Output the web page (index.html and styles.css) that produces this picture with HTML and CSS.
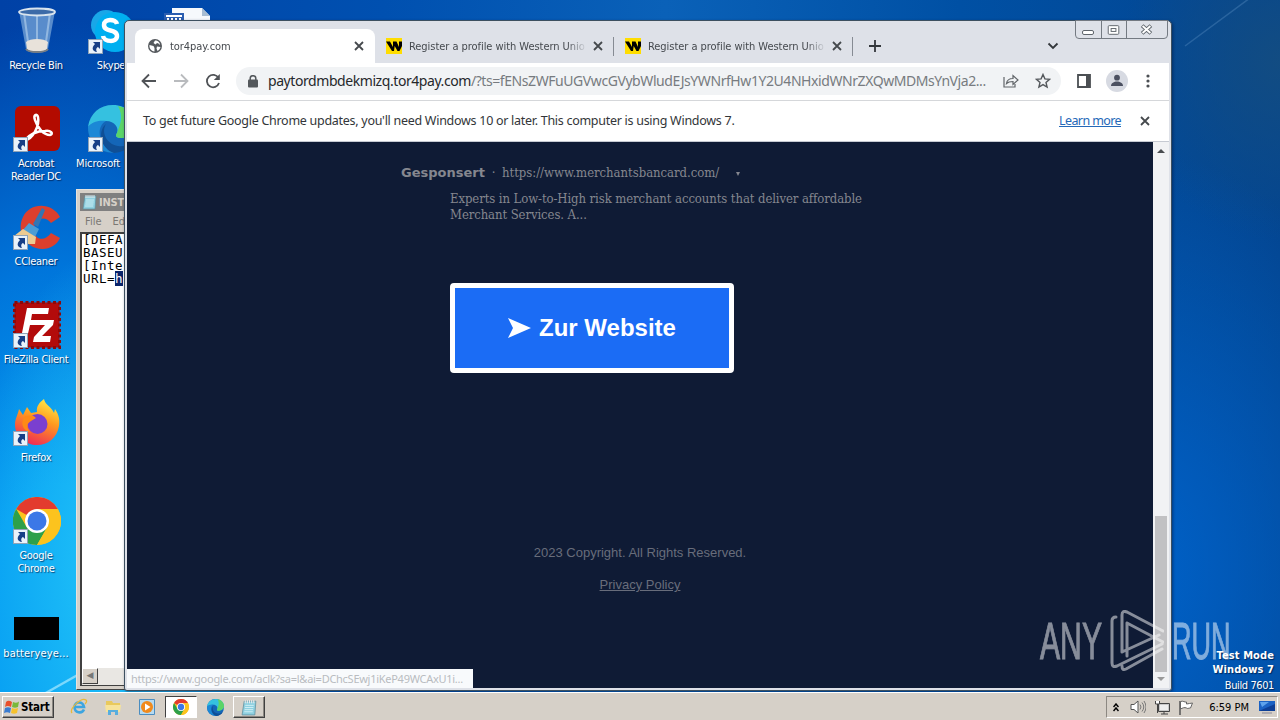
FILE: index.html
```html
<!DOCTYPE html>
<html lang="en">
<head>
    <meta charset="UTF-8">
    <meta name="viewport" content="width=device-width, initial-scale=1.0">
    <title>tor4pay.com</title>
    <link rel="stylesheet" href="styles.css">
</head>
<body>
    <svg width="0" height="0" class="defs">
        <defs>
            <symbol id="shortcut" viewBox="0 0 15 15">
                <rect width="15" height="15" fill="#8fa3b8"/>
                <rect x="1" y="1" width="13" height="13" fill="#e9f2fa"/>
                <path d="M5 3h7v7l-2-2C8.500 8.500 7.500 10.500 9 13 4.500 12.500 3 9 7 5z" fill="#173f86"/>
            </symbol>
            <symbol id="chrome" viewBox="0 0 48 48">
                <circle cx="24" cy="24" r="24" fill="#fcc31e"/>
                <path d="M24 24 3.200 12A24 24 0 0 1 44.800 12z" fill="#e33b2e"/>
                <path d="M3.200 12A24 24 0 0 0 24 48L34.400 30 24 24 13.600 30z" fill="#2da04a"/>
                <path d="M24 12H44.800A24 24 0 0 1 24 48L34.400 30z" fill="#fcc31e"/>
                <circle cx="24" cy="24" r="12" fill="#fff"/>
                <circle cx="24" cy="24" r="9.500" fill="#3b78e7"/>
            </symbol>
            <symbol id="edge" viewBox="0 0 48 48">
                <circle cx="24" cy="24" r="24" fill="#1466b8"/>
                <path d="M0 22C2 8 12 0 25 0c14 0 23 10 23 20 0 8-7 13-14 13-6 0-7-2-5-5 2-5-2-12-11-12C9 16 3 19 0 22z" fill="#35c1e0"/>
                <path d="M30 1c11 2 18 10 18 19 0 8-7 13-14 13-6 0-7-2-5-5 3-8 7-16 1-27z" fill="#5bd468"/>
                <path d="M18 16c-6 3-8 11-5 19 3 7 10 12 18 12-14 3-31-6-31-25 3-4 9-7 18-6z" fill="#1b88d6"/>
                <path d="M18 19c-5 8 0 20 12 22 6 1 11-1 15-5-3 7-11 12-19 12C13 44 9 26 18 19z" fill="#0f4f96"/>
            </symbol>
            <symbol id="notepad" viewBox="0 0 16 16">
                <path d="M3 2h11l-1 13H1z" fill="#8fd0e0" stroke="#5d8c9c" stroke-width=".7"/>
                <path d="M4 6h8M3.700 8h8M3.400 10h8M3.100 12h8" stroke="#d8f3f8" stroke-width=".8"/>
                <path d="M4 1v3M6 1v3M8 1v3M10 1v3M12 1v3" stroke="#e9e9e9" stroke-width="1"/>
            </symbol>
            <symbol id="wu" viewBox="0 0 16 16">
                <rect width="16" height="16" fill="#fd0"/>
                <path d="M0 3.500h4l3 5.500V3.500h3.500L13 9V3.500h3V8l-2.500 5h-2L8.700 8 8 13H6z"/>
            </symbol>
            <symbol id="close" viewBox="0 0 10 10">
                <path d="M1 1l8 8M9 1l-8 8" stroke="#45494d" stroke-width="1.800" fill="none"/>
            </symbol>
        </defs>
    </svg>

    <div class="desktop">
        <svg class="rays" viewBox="0 0 1280 720">
            <path d="M44 694L90 668" stroke="#9fe6ff" stroke-width="2.500" opacity=".75"/>
            <path d="M1185 46L1250 -2" stroke="#6fa0d0" stroke-width="1.500" opacity=".3"/>
        </svg>

        <div class="icons col-1">
            <div class="icon">
                <svg class="pic" viewBox="0 0 48 48">
                    <path d="M6 4l7 38c0 5 22 5 22 0l7-38z" fill="#6f9fd4" opacity=".8"/>
                    <path d="M11 6l5 36M24 7v30M37 6l-5 36" stroke="#b9d4ee" stroke-width="2" opacity=".6"/>
                    <path d="M13 35c4-4 18-4 22 0l-1 7c-4 4-16 4-20 0z" fill="#e8e2da"/>
                    <ellipse cx="24" cy="5" rx="18" ry="3.500" fill="#3d6ba8" stroke="#d9e4ee" stroke-width="1.800"/>
                    <path d="M13 42c3 4 19 4 22 0" fill="none" stroke="#777d83" stroke-width="2"/>
                </svg>
                <span>Recycle Bin</span>
            </div>
            <div class="icon">
                <svg class="pic" viewBox="0 0 48 48">
                    <rect x="2" y="1" width="45" height="45" rx="6" fill="#b30b00"/>
                    <path d="M12 35c7 0 15-14 13-23-1-4-5-2-3 3 3 9 9 15 15 15 4-1 1-5-5-4-8 0-15 3-20 9z" fill="none" stroke="#fff" stroke-width="2.500"/>
                    <use href="#shortcut" x="0" y="32" width="15" height="15"/>
                </svg>
                <span>Acrobat<br>Reader DC</span>
            </div>
            <div class="icon">
                <svg class="pic" viewBox="0 0 48 48">
                    <path d="M47 14C39-1 17-1 10 14c-6 12 0 27 13 31 10 3 20-1 24-10l-9-5c-7 10-18 6-17-5 1-10 11-13 17-5z" fill="#dc3f2d"/>
                    <path d="M29 5l3 2-7 17-5-3z" fill="#3276b4"/>
                    <path d="M16 20l10 6-4 8-12-7z" fill="#4d9dd4"/>
                    <path d="M10 26l13 8-1 7H2l-1-8z" fill="#edcb91"/>
                    <use href="#shortcut" x="0" y="32" width="15" height="15"/>
                </svg>
                <span>CCleaner</span>
            </div>
            <div class="icon">
                <svg class="pic" viewBox="0 0 48 48">
                    <rect x="1.500" y="1.500" width="45" height="45" fill="#b30b0b" stroke="#8d0808" stroke-width="3" stroke-dasharray="3 2.500"/>
                    <path d="M14 7h22l-1 6H19l-1 6h11l-1 5H17l-3 13H8z" fill="#fff"/>
                    <path d="M26 19h15l-1 5-11 11h9l-1 6H20l1-5 11-12h-7z" fill="#fff"/>
                    <use href="#shortcut" x="0" y="32" width="15" height="15"/>
                </svg>
                <span>FileZilla Client</span>
            </div>
            <div class="icon">
                <svg class="pic" viewBox="0 0 48 48">
                    <defs>
                        <linearGradient id="fox" x1=".8" y1="0" x2=".4" y2="1">
                            <stop offset="0" stop-color="#fff04a"/>
                            <stop offset=".45" stop-color="#ff9a1f"/>
                            <stop offset="1" stop-color="#f02c55"/>
                        </linearGradient>
                    </defs>
                    <path d="M2 26c0-7 3-10 4-16l4 6 4-8 4 6 6-1c-1-6 3-10 7-13 1 6 8 8 10 14l1-4c4 6 5 11 4 17-2 12-11 19-22 19S2 38 2 26z" fill="url(#fox)"/>
                    <circle cx="24.500" cy="25" r="10" fill="#7a3fd0"/>
                    <path d="M12 17c5-1 9-1 11 2l-5 3c-5 3-5 7 0 12-9-3-11-10-6-17z" fill="#ff8a16"/>
                    <use href="#shortcut" x="0" y="32" width="15" height="15"/>
                </svg>
                <span>Firefox</span>
            </div>
            <div class="icon">
                <svg class="pic" viewBox="0 0 48 48">
                    <use href="#chrome" width="48" height="48"/>
                    <use href="#shortcut" x="0" y="32" width="15" height="15"/>
                </svg>
                <span>Google<br>Chrome</span>
            </div>
            <div class="icon">
                <svg class="pic" viewBox="0 0 48 48"><rect x="1" y="22" width="45" height="23"/></svg>
                <span class="wide">batteryeye...</span>
            </div>
        </div>

        <div class="icons col-2">
            <div class="icon">
                <svg class="pic" viewBox="0 0 48 48">
                    <circle cx="18" cy="18" r="15" fill="#19a7e8"/>
                    <circle cx="27" cy="25" r="20" fill="#00aff0"/>
                    <path d="M29 17c-1-5-13-6-13 1 0 8 13 3 13 11 0 7-13 6-14 0" fill="none" stroke="#fff" stroke-width="4.500"/>
                    <use href="#shortcut" x="0" y="32" width="15" height="15"/>
                </svg>
                <span>Skype</span>
            </div>
            <div class="icon">
                <svg class="pic" viewBox="0 0 48 48">
                    <use href="#edge" width="48" height="48"/>
                    <use href="#shortcut" x="0" y="32" width="15" height="15"/>
                </svg>
                <span class="edge-label">Microsoft</span>
            </div>
        </div>

        <div class="icons col-3">
            <div class="icon">
                <svg class="pic" viewBox="0 0 48 48">
                    <path d="M9 1h30l8 8v38H9z" fill="#f6f9fc"/>
                    <path d="M39 1v8h8z" fill="#a8bdd2"/>
                    <rect x="1" y="6" width="20" height="22" fill="#2a5db0"/>
                    <path d="M3 9h16M4 12h2m2 0h2m2 0h2m2 0h2" stroke="#fff" stroke-width="2"/>
                </svg>
            </div>
        </div>

        <!-- notepad, mostly hidden behind the browser -->
        <div class="notepad">
            <div class="np-title"><svg width="16" height="16"><use href="#notepad"/></svg><span>INST</span></div>
            <div class="np-menu"><span>File</span><span>Ed</span></div>
            <div class="np-body">
                <pre>[DEFA
BASEU
[Inte
URL=<mark>h</mark></pre>
                <div class="np-scroll"><i>◀</i></div>
            </div>
        </div>

        <div class="browser">
            <div class="tabstrip">
                <div class="tab active">
                    <svg width="16" height="16" viewBox="0 0 16 16">
                        <circle cx="8" cy="8" r="7" fill="#55595d"/>
                        <path d="M2.500 7l4 1 1 2v3.500C4 13 2 10 2.500 7zM8 2.500L6.500 5l2 1.500L10 5l1.500.5L13 7c0-2.500-2-4.500-5-4.500zM10 8.500l3.500.5c-.5 2-1.500 3-3 4l-1-2.500z" fill="#fff"/>
                    </svg>
                    <span class="tab-title">tor4pay.com</span>
                    <svg class="tab-x"><use href="#close"/></svg>
                </div>
                <div class="tab">
                    <svg width="16" height="16"><use href="#wu"/></svg>
                    <span class="tab-title">Register a profile with Western Unio</span>
                    <svg class="tab-x"><use href="#close"/></svg>
                </div>
                <div class="tab">
                    <svg width="16" height="16"><use href="#wu"/></svg>
                    <span class="tab-title">Register a profile with Western Unio</span>
                    <svg class="tab-x"><use href="#close"/></svg>
                </div>
                <svg class="new-tab" width="12" height="12" viewBox="0 0 12 12"><path d="M6 0v12M0 6h12" stroke="#33373b" stroke-width="1.800"/></svg>
                <svg class="tab-search" width="12" height="8" viewBox="0 0 12 8"><path d="M1.500 1.500L6 6l4.500-4.500" stroke="#33373b" stroke-width="1.800" fill="none"/></svg>
                <div class="win-buttons">
                    <svg width="25" height="17" viewBox="0 0 25 17"><rect x="6.500" y="9.500" width="11" height="4" rx="1.500" fill="#fff" stroke="#5f656c"/></svg>
                    <svg width="25" height="17" viewBox="0 0 25 17"><rect x="6.500" y="4.500" width="11" height="9" rx="1" fill="#fff" stroke="#5f656c"/><rect x="9.500" y="7.500" width="5" height="3" fill="#fff" stroke="#5f656c"/></svg>
                    <svg width="41" height="17" viewBox="0 0 41 17"><path d="M15.500 4.500l9 8M24.500 4.500l-9 8" stroke="#5f656c" stroke-width="4"/><path d="M16 5l8 7M24 5l-8 7" stroke="#fff" stroke-width="2"/></svg>
                </div>
            </div>

            <div class="toolbar">
                <svg class="nav" viewBox="0 0 16 16"><path d="M15 8H2M8 1.500L1.500 8 8 14.500" stroke="#505357"/></svg>
                <svg class="nav" viewBox="0 0 16 16"><path d="M1 8h13M8 1.500L14.500 8 8 14.500" stroke="#b9bbbe"/></svg>
                <svg class="nav" viewBox="0 0 16 16"><path d="M13.500 5A6.200 6.200 0 1 0 14 10" stroke="#505357"/><path d="M14.800 1v6h-6z" fill="#505357"/></svg>
                <div class="omnibox">
                    <svg width="10" height="13" viewBox="0 0 10 13"><rect y="4.500" width="10" height="8" rx="1" fill="#54585c"/><path d="M2.200 5V3.500a2.800 2.800 0 0 1 5.600 0V5" fill="none" stroke="#54585c" stroke-width="1.500"/></svg>
                    <span class="url"><b>paytordmbdekmizq.tor4pay.com</b><i>/?ts=fENsZWFuUGVwcGVybWludEJsYWNrfHw1Y2U4NHxidWNrZXQwMDMsYnVja2...</i></span>
                    <svg class="share" width="16" height="14" viewBox="0 0 16 14"><path d="M1 3v10h11v-3M3.500 9.500C4 6 6.500 4.500 10 4.500V1.500l5 4.500-5 4.500v-3c-3 0-5 .5-6.500 2z" fill="none" stroke="#606468" stroke-width="1.200"/></svg>
                    <svg width="16" height="16" viewBox="0 0 16 16"><path d="M8 1.500l1.900 4.400 4.700.4-3.600 3.100 1.100 4.700L8 11.600l-4.100 2.500L5 9.400 1.400 6.300l4.700-.4z" fill="none" stroke="#54585c" stroke-width="1.400"/></svg>
                </div>
                <svg width="14" height="14" viewBox="0 0 14 14"><path d="M1 1h12v12H1z" fill="none" stroke="#4b4f53" stroke-width="1.800"/><path d="M9 1h4v12H9z" fill="#4b4f53"/></svg>
                <svg class="avatar" width="22" height="22" viewBox="0 0 22 22"><circle cx="11" cy="11" r="11" fill="#d7dae2"/><circle cx="11" cy="7.700" r="2.900" fill="#4b5060"/><path d="M5 16c0-6 12-6 12 0z" fill="#4b5060"/></svg>
                <svg width="4" height="14" viewBox="0 0 4 14" fill="#4b4f53"><circle cx="2" cy="2" r="1.600"/><circle cx="2" cy="7" r="1.600"/><circle cx="2" cy="12" r="1.600"/></svg>
            </div>

            <div class="infobar">
                <span class="info-text">To get future Google Chrome updates, you'll need Windows 10 or later. This computer is using Windows 7.</span>
                <a href="#">Learn more</a>
                <svg class="info-x"><use href="#close"/></svg>
            </div>

            <div class="viewport">
                <div class="page">
                    <div class="ad-line"><b>Gesponsert</b><span class="dot">·</span><span class="ad-url">https://www.merchantsbancard.com/</span><i></i></div>
                    <p class="ad-text">Experts in Low-to-High risk merchant accounts that deliver affordable<br>Merchant Services. A...</p>
                    <a class="cta" href="#"><svg width="23" height="20" viewBox="0 0 23 20"><path d="M0 0l23 10L0 20l5-10z" fill="#fff"/></svg><span>Zur Website</span></a>
                    <div class="footer">
                        <p>2023 Copyright. All Rights Reserved.</p>
                        <a href="#">Privacy Policy</a>
                    </div>
                </div>
                <div class="scrollbar">
                    <i class="up"></i>
                    <i class="thumb"></i>
                    <i class="down"></i>
                </div>
                <div class="status">https://www.google.com/aclk?sa=l&amp;ai=DChcSEwj1iKeP49WCAxU1i...</div>
            </div>
        </div>

        <div class="build"><b>Test Mode</b><b>Windows 7</b><span>Build 7601</span></div>

        <div class="watermark">
            <span>ANY</span>
            <svg width="54" height="62" viewBox="0 0 54 62" fill="none" stroke="#fff" stroke-width="3" stroke-linejoin="round" stroke-linecap="round">
                <path d="M6 7q-4 0-4 4v42q0 5 5 3L52 34"/>
                <path d="M12 42V5q0-5 5-3l36 19M17 13l36 19M17 13v33M12 42l37-17M52 39L16 59q-4 2-4-3"/>
            </svg>
            <span>RUN</span>
        </div>
    </div>

    <div class="taskbar">
        <div class="start">
            <svg width="16" height="14" viewBox="0 0 16 14">
                <path d="M2 2c2-2 4-1 6 0L7 7C5 6 3 5.500 1 7z" fill="#e8502c"/>
                <path d="M9 2c2 1 4 1 6-.5L14 7c-2 1-4 1-6 0z" fill="#79b83a"/>
                <path d="M1 8c2-1 4-1 6 0l-1 5c-2-1-4-1-6 0z" fill="#3a7cd0"/>
                <path d="M8 8c2 1 4 1 6 0l-1 5c-2 1-4 1-6 0z" fill="#f6c22c"/>
            </svg>
            <b>Start</b>
        </div>
        <div class="quick">
            <svg width="18" height="18" viewBox="0 0 18 18"><path d="M14 11.500C12 16 4.500 15 4.500 9S13 3 14 9H5" fill="none" stroke="#3da5e0" stroke-width="2.600"/><path d="M2 15C-1 11 11-1 16 2c1 1 0 3-1 4" fill="none" stroke="#e8b93a" stroke-width="1.300"/></svg>
            <svg width="18" height="18" viewBox="0 0 18 18"><path d="M2 3h6l1 2h7v9H2z" fill="#e9c95c"/><path d="M1 7h16l-1 7H2z" fill="#f7e39a"/><path d="M4 17v-5h10v5h-3v-3H7v3z" fill="#58aede"/></svg>
            <svg width="18" height="18" viewBox="0 0 18 18"><path d="M1.500 1.500h15v15h-15z" fill="#b6daf0" stroke="#4b8dc0"/><circle cx="9" cy="9" r="6" fill="#f08a1c"/><path d="M7 5.500v7L12.500 9z" fill="#fff"/></svg>
        </div>
        <div class="task pressed"><svg width="16" height="16"><use href="#chrome"/></svg></div>
        <svg class="edge-task" width="17" height="17"><use href="#edge"/></svg>
        <div class="task"><svg width="17" height="17"><use href="#notepad"/></svg></div>
        <div class="tray">
            <svg width="6" height="9" viewBox="0 0 6 9"><path d="M.5 4L3 1l2.500 3M.5 8L3 5l2.500 3" fill="none" stroke="#000" stroke-width="1.500"/></svg>
            <svg class="speaker" width="16" height="14" viewBox="0 0 16 14"><path d="M1 4.500h3L8 1v12L4 9.500H1z" fill="#fff" stroke="#555"/><path d="M10 4.500q2 2.500 0 5M12 2.500q3.500 4.500 0 9M14 1q4 6 0 12" fill="none" stroke="#777"/></svg>
            <svg class="net" width="16" height="15" viewBox="0 0 16 15"><path d="M4.500 3.500h11v8h-11z" fill="#c9c9c9" stroke="#444"/><path d="M6 5h8v5H6z" fill="#eee"/><path d="M7 14h7M10 12v2" stroke="#444"/><path d="M1.500 1v3h4V1M3.500 4v9" stroke="#444" fill="#fff"/></svg>
            <svg class="flag" width="16" height="15" viewBox="0 0 16 15"><path d="M2 1v14" stroke="#555" stroke-width="1.500"/><path d="M2.500 1.500c3-1 4 1 6 .500v2c2 0 4-1 6-1l-2 5c-2 0-3 1-4 0-2-1-4 0-6 1z" fill="#fff" stroke="#666"/></svg>
            <span class="clock">6:59 PM</span>
            <svg width="16" height="13" viewBox="0 0 16 13"><path d="M0 0h16v10H0z" fill="#1b62c4"/><path d="M0 10L16 3v7z" fill="#0d3f96"/><path d="M1 1h9L3 6z" fill="#5da2ec"/><path d="M3 12h10" stroke="#889"/></svg>
        </div>
    </div>
</body>
</html>
```
FILE: styles.css
```css
* {
    box-sizing: border-box;
}
body {
    margin: 0;
    width: 1280px;
    height: 720px;
    overflow: hidden;
    position: relative;
    font-family: "DejaVu Sans Condensed", "DejaVu Sans", sans-serif;
    font-stretch: condensed;
    font-size: 11px;
}
svg {
    flex: none;
    display: block;
}
.defs {
    position: absolute;
}
p {
    margin: 0;
}

/* Desktop */
.desktop {
    height: 692px;
    position: relative;
    background:
        radial-gradient(ellipse 160px 330px at 125px 570px, rgba(40, 205, 250, .9), rgba(20, 170, 245, 0) 100%),
        radial-gradient(ellipse 330px 620px at 60px 640px, #059cf2 25%, rgba(0, 130, 232, .8) 60%, rgba(0, 72, 172, 0) 100%),
        radial-gradient(ellipse 300px 420px at 1130px 570px, #0062ca, rgba(0, 80, 180, 0) 100%),
        radial-gradient(ellipse 160px 180px at 1280px 60px, #124c82, rgba(0, 64, 140, 0) 100%),
        linear-gradient(90deg, #0041a6 0, #0050b0 30%, #0a61b8 52%, #0050a4 75%, #034590 100%);
}
.rays {
    position: absolute;
    inset: 0;
    width: 1280px;
    height: 720px;
}
.icons {
    position: absolute;
    top: 8px;
    width: 74px;
}
.col-1 {
    left: 0;
}
.col-2 {
    left: 75px;
}
.col-3 {
    left: 150px;
}
.icon {
    height: 98px;
    display: flex;
    flex-direction: column;
    align-items: center;
    gap: 3px;
    color: #fff;
    line-height: 13px;
    letter-spacing: -.3px;
    text-align: center;
    white-space: nowrap;
    text-shadow: 1px 1px 1px rgba(0, 20, 60, .7);
}
.icon .wide {
    letter-spacing: .15px;
}
.pic {
    width: 48px;
    height: 48px;
    margin-top: -1px;
}
.icon span {
    margin: 1px 2px 0 0;
}
.icon .edge-label {
    align-self: flex-start;
    margin-left: 1px;
    letter-spacing: -.1px;
}

/* Notepad */
.notepad {
    position: absolute;
    left: 76px;
    top: 189px;
    width: 300px;
    height: 501px;
    padding: 3px;
    background: #d6d0c8;
    border: 1px solid #e6e3de;
    border-bottom-color: #444;
    display: flex;
    flex-direction: column;
}
.np-title {
    height: 18px;
    display: flex;
    align-items: center;
    gap: 1px;
    padding-left: 2px;
    background: #808080;
    color: #d6d0c8;
    font-weight: bold;
    letter-spacing: -.2px;
}
.np-menu {
    height: 21px;
    display: flex;
    align-items: center;
    gap: 11px;
    padding-left: 5px;
    color: #7b7873;
}
.np-body {
    flex: 1;
    background: #fff;
    border: 1px solid #404040;
    border-width: 2px 1px 1px 2px;
    display: flex;
    flex-direction: column;
    justify-content: space-between;
}
.np-body pre {
    margin: -1px 0 0;
    padding-left: 1px;
    font: 12.5px/13px "DejaVu Sans Mono", monospace;
    letter-spacing: .45px;
}
.np-body mark {
    background: #0a246a;
    color: #fff;
}
.np-scroll {
    height: 17px;
    background: #e9e7e3;
}
.np-scroll i {
    display: block;
    width: 16px;
    height: 16px;
    font: 9px/13px "DejaVu Sans", sans-serif;
    text-align: center;
    color: #777;
    background: #d6d0c8;
    border: 1px solid #fff;
    border-right-color: #404040;
    border-bottom-color: #404040;
}

/* Browser */
.browser {
    position: absolute;
    left: 124px;
    top: 20px;
    width: 1048px;
    height: 671px;
    background: #dee1e8;
    border: 1px solid #3d5060;
    border-radius: 5px 5px 3px 3px;
    padding: 0 2px 2px;
    display: flex;
    flex-direction: column;
    box-shadow: 1px 1px 3px rgba(0, 20, 60, .5);
}
.tabstrip {
    height: 42px;
    padding: 8px 0 0 8px;
    display: flex;
    align-items: center;
    position: relative;
}
.tab {
    width: 239px;
    height: 34px;
    display: flex;
    align-items: center;
    padding-left: 11px;
    color: #45494e;
    position: relative;
}
.tab.active {
    width: 240px;
    padding-left: 12px;
    background: #fff;
    border-radius: 8px 8px 0 0;
}
.tab:not(.active)::after {
    content: "";
    position: absolute;
    right: 0;
    top: 8px;
    width: 1px;
    height: 19px;
    background: #868b93;
}
.tab-title {
    width: 176px;
    margin-left: 7px;
    overflow: hidden;
    white-space: nowrap;
    letter-spacing: -.05px;
    -webkit-mask-image: linear-gradient(90deg, #000 158px, transparent 178px);
    mask-image: linear-gradient(90deg, #000 158px, transparent 178px);
}
.tab-x {
    width: 10px;
    height: 10px;
    margin-left: 8px;
}
.new-tab {
    margin-left: 16px;
}
.tab-search {
    margin-left: 166px;
}
.win-buttons {
    position: absolute;
    right: 1px;
    top: -1px;
    display: flex;
    border: 1px solid #747a82;
    border-radius: 0 0 4px 4px;
}
.win-buttons svg + svg {
    border-left: 1px solid #747a82;
}
.toolbar {
    height: 38px;
    background: #fff;
    border-bottom: 1px solid #d5d7da;
    display: flex;
    align-items: center;
    padding: 0 20px 1px 14px;
    gap: 16px;
}
.nav {
    width: 16px;
    height: 16px;
    fill: none;
    stroke-width: 1.8;
}
.omnibox {
    width: 825px;
    height: 28px;
    margin-left: -1px;
    padding: 0 10px 0 12px;
    border-radius: 14px;
    background: #f1f3f5;
    display: flex;
    align-items: center;
}
.url {
    width: 731px;
    margin-left: 10px;
    font: 14px/18px "Noto Sans", sans-serif;
    letter-spacing: -.43px;
    white-space: nowrap;
    color: #777b80;
}
.url b, .url i {
    font-weight: normal;
    font-style: normal;
}
.url b {
    color: #26282b;
}
.share {
    margin: 0 16px 0 4px;
}
.avatar {
    margin: 0 2px 0 -1px;
}
.infobar {
    height: 41px;
    background: #fff;
    border-bottom: 1px solid #c6cad2;
    display: flex;
    align-items: center;
    padding: 0 19px 1px 16px;
    font: 12.5px "Noto Sans", sans-serif;
    letter-spacing: -.28px;
    color: #333639;
}
.infobar a {
    margin-left: auto;
    letter-spacing: -.6px;
    color: #2468b8;
}
.info-x {
    width: 10px;
    height: 10px;
    margin-left: 19px;
}
.viewport {
    flex: 1;
    display: flex;
    position: relative;
    background: #0f1b35;
}
.page {
    flex: 1;
    padding-top: 22px;
    color: #85878f;
}
.ad-line {
    display: flex;
    align-items: center;
    height: 16px;
    padding-left: 274px;
    font: 13px "DejaVu Serif Condensed", "DejaVu Serif", serif;
    white-space: nowrap;
}
.ad-line b {
    width: 84px;
    font: bold 13px "DejaVu Sans", sans-serif;
}
.dot {
    width: 17px;
    text-align: center;
}
.ad-url {
    width: 217px;
    letter-spacing: -.03px;
}
.ad-line i {
    margin: 4px 0 0 17px;
    border: 2.5px solid transparent;
    border-top: 4px solid #85878f;
    border-bottom: 0;
}
.ad-text {
    margin: 11px 0 0 323px;
    font: 13px/16px "DejaVu Serif Condensed", "DejaVu Serif", serif;
    letter-spacing: -.09px;
    white-space: nowrap;
}
.cta {
    width: 284px;
    height: 90px;
    margin: 60px 0 0 323px;
    display: flex;
    align-items: center;
    justify-content: center;
    gap: 8px;
    background: #1b6cf5;
    border: 5px solid #fff;
    border-radius: 4px;
    color: #fff;
    font: bold 24px "Liberation Sans", sans-serif;
    text-decoration: none;
}
.footer {
    margin-top: 172px;
    text-align: center;
    font: 13px/16px "Liberation Sans", sans-serif;
    color: #686d7b;
}
.footer a {
    display: inline-block;
    margin-top: 16px;
    color: #686d7b;
}
.scrollbar {
    width: 16px;
    background: #f1f2f4;
    display: flex;
    flex-direction: column;
    align-items: center;
    padding: 7px 0 7px;
}
.up, .down {
    border: 4px solid transparent;
}
.up {
    border-top: 0;
    border-bottom: 4px solid #484b4f;
}
.down {
    margin-top: 5px;
    border-bottom: 0;
    border-top: 4px solid #999;
}
.thumb {
    width: 12px;
    height: 156px;
    margin-top: auto;
    background: #c1c1c3;
}
.status {
    position: absolute;
    left: 0;
    bottom: 0;
    width: 346px;
    height: 19px;
    padding-left: 4px;
    background: #f8fafc;
    color: #b9bcc0;
    font: 11px/20px "Noto Sans", sans-serif;
    letter-spacing: -.27px;
    white-space: nowrap;
}

/* Overlays on the desktop */
.build {
    position: absolute;
    right: 6px;
    top: 649px;
    display: flex;
    flex-direction: column;
    align-items: flex-end;
    color: #fff;
    line-height: 14px;
    text-shadow: 1px 1px 1px rgba(0, 20, 60, .7);
}
.build b {
    letter-spacing: .1px;
}
.build span {
    margin-top: 2px;
    letter-spacing: -.4px;
}
.watermark {
    position: absolute;
    left: 1040px;
    top: 610px;
    display: flex;
    align-items: center;
    gap: 8px;
    color: #fff;
    opacity: .5;
}
.watermark span {
    width: 62px;
    font: 52px/62px "Liberation Sans Narrow", "Liberation Sans", sans-serif;
    -webkit-text-stroke: 1px #fff;
    transform: scaleX(.58);
    transform-origin: left;
}
.watermark span:last-child {
    transform: scaleX(.52);
}

/* Taskbar */
.taskbar {
    height: 28px;
    background: #d6d0c8;
    border-top: 1px solid #fff;
    position: relative;
    display: flex;
    align-items: center;
    padding: 1px 2px 0;
}
.start {
    width: 52px;
    height: 22px;
    display: flex;
    align-items: center;
    gap: 1px;
    padding-left: 1px;
    font-size: 11.5px;
    letter-spacing: -.2px;
    border: 1px solid #fff;
    border-right-color: #404040;
    border-bottom-color: #404040;
    box-shadow: inset -1px -1px #8c8882;
}
.quick {
    display: flex;
    gap: 16px;
    margin: 0 9px 0 16px;
}
.task {
    width: 32px;
    height: 22px;
    display: flex;
    align-items: center;
    justify-content: center;
    border: 1px solid #fff;
    border-right-color: #404040;
    border-bottom-color: #404040;
    box-shadow: inset -1px -1px #8c8882;
}
.task.pressed {
    background: #fff;
    border-color: #404040 #fff #fff #404040;
    box-shadow: none;
}
.edge-task {
    margin: 0 9px 0 10px;
}
.tray {
    width: 172px;
    height: 22px;
    margin-left: auto;
    padding: 0 2px 0 6px;
    display: flex;
    align-items: center;
    border: 1px solid #8c8882;
    border-right-color: #fff;
    border-bottom-color: #fff;
}
.speaker {
    margin-left: 11px;
}
.net, .flag {
    margin-left: 8px;
}
.clock {
    margin: 0 10px 0 auto;
    white-space: nowrap;
}
```
